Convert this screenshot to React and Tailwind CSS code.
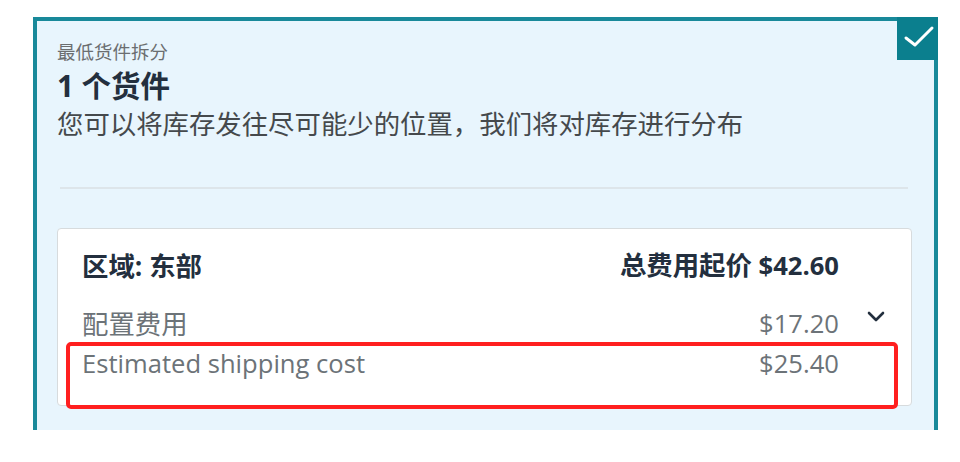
import React from "react";

const FONT = { fontFamily: '"Open Sans", "Noto Sans CJK SC", sans-serif' };

export default function App() {
  return (
    <div className="w-[960px] h-[462px] bg-white overflow-hidden" style={FONT}>
      <div className="pt-[17px] pl-[33px] w-[938px]">
        <div className="relative h-[413px] bg-[#e8f5fd] border-[4px] border-b-0 border-[#18899a] pt-[19px] pl-[20px] pr-[22px]">
          <div className="absolute top-[-4px] right-[-4px] w-[41px] h-[43px] bg-[#0b7f8e] flex items-center justify-center">
            <svg width="32" height="24" viewBox="0 0 32 24" fill="none" className="mt-[-3px] ml-[3px]">
              <polyline points="3,13 12,20 29,3" stroke="#ffffff" strokeWidth="3" strokeLinecap="round" strokeLinejoin="round" />
            </svg>
          </div>
          <div className="text-[18.5px] leading-[24px] text-[#6b6e70]">最低货件拆分</div>
          <div className="mt-[4px] text-[29.5px] leading-[36px] font-bold text-[#232f3e]">1 个货件</div>
          <div className="mt-[3px] text-[26.4px] leading-[34px] text-[#45494c]">
            您可以将库存发往尽可能少的位置，我们将对库存进行分布
          </div>
          <div className="mt-[46px] ml-[3px] mr-[4px] h-[2px] bg-[#dde5ea]" />
          <div className="mt-[39px] bg-white border border-[#d7dbdd] rounded-[4px] pt-[19px] pb-[21px] pl-[24px] pr-[25px]">
            <div className="flex items-center text-[25.6px] leading-[34px] font-bold text-[#232f3e]">
              <div className="flex-1 text-[26.4px]">区域: 东部</div>
              <div>
                <span className="text-[26.4px]">总费用起价</span> $42.60
              </div>
              <div className="w-[47px]" />
            </div>
            <div className="mt-[21px] flex items-center text-[25.6px] leading-[40px] text-[#6c7378]">
              <div className="flex-1 text-[26.4px]">配置费用</div>
              <div>$17.20</div>
              <div className="w-[47px] h-[40px] flex justify-end items-start">
                <svg width="18" height="11" viewBox="0 0 18 11" fill="none" className="mt-[7px] mr-[1px]">
                  <polyline points="2,2 9,9 16,2" stroke="#232f3e" strokeWidth="2.6" strokeLinecap="round" strokeLinejoin="round" />
                </svg>
              </div>
            </div>
            <div className="flex items-center text-[25.6px] leading-[40px] text-[#6c7378]">
              <div className="flex-1">Estimated shipping cost</div>
              <div>$25.40</div>
              <div className="w-[47px]" />
            </div>
          </div>
          <div className="absolute left-[29px] top-[321px] w-[832px] h-[67px] border-[4px] border-[#ff1f1f] rounded-[5px]" />
        </div>
      </div>
    </div>
  );
}
